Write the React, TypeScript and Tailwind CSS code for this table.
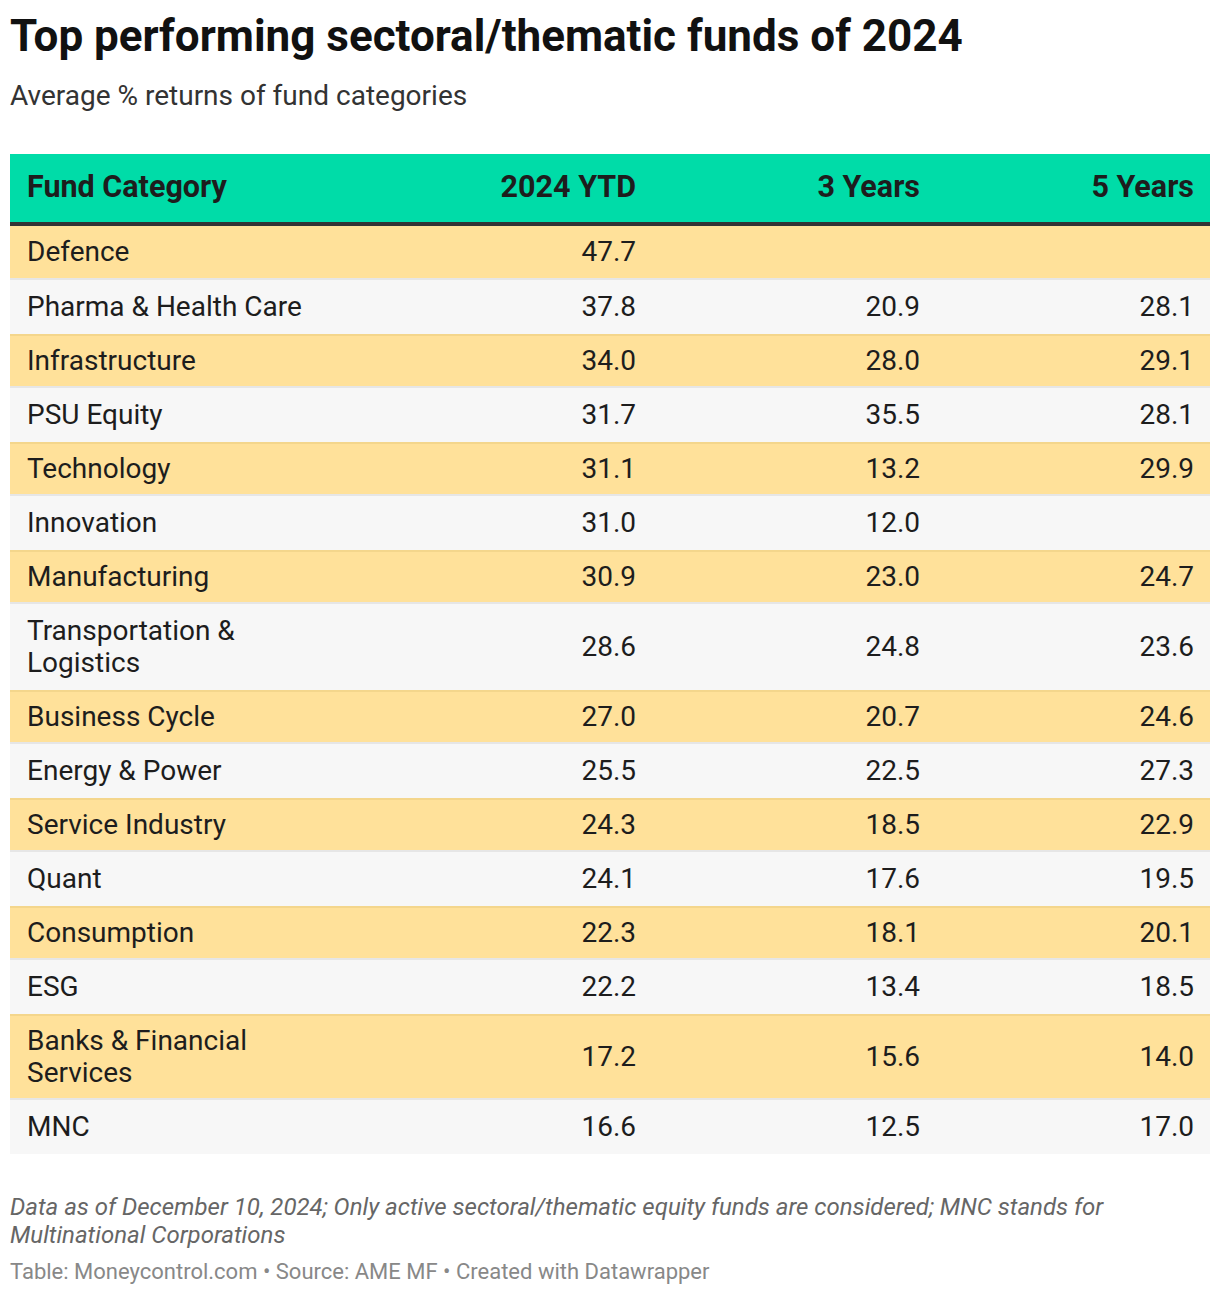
import React from "react";

type Row = { name: string; ytd: string; y3: string; y5: string };

const rows: Row[] = [
  { name: "Defence", ytd: "47.7", y3: "", y5: "" },
  { name: "Pharma & Health Care", ytd: "37.8", y3: "20.9", y5: "28.1" },
  { name: "Infrastructure", ytd: "34.0", y3: "28.0", y5: "29.1" },
  { name: "PSU Equity", ytd: "31.7", y3: "35.5", y5: "28.1" },
  { name: "Technology", ytd: "31.1", y3: "13.2", y5: "29.9" },
  { name: "Innovation", ytd: "31.0", y3: "12.0", y5: "" },
  { name: "Manufacturing", ytd: "30.9", y3: "23.0", y5: "24.7" },
  { name: "Transportation & Logistics", ytd: "28.6", y3: "24.8", y5: "23.6" },
  { name: "Business Cycle", ytd: "27.0", y3: "20.7", y5: "24.6" },
  { name: "Energy & Power", ytd: "25.5", y3: "22.5", y5: "27.3" },
  { name: "Service Industry", ytd: "24.3", y3: "18.5", y5: "22.9" },
  { name: "Quant", ytd: "24.1", y3: "17.6", y5: "19.5" },
  { name: "Consumption", ytd: "22.3", y3: "18.1", y5: "20.1" },
  { name: "ESG", ytd: "22.2", y3: "13.4", y5: "18.5" },
  { name: "Banks & Financial Services", ytd: "17.2", y3: "15.6", y5: "14.0" },
  { name: "MNC", ytd: "16.6", y3: "12.5", y5: "17.0" },
];

export default function App() {
  return (
    <div
      className="w-[1220px] bg-white px-[10px] pt-[10px] pb-[10px] text-[#1d1d1d]"
      style={{ fontFamily: "Roboto, 'Liberation Sans', sans-serif" }}
    >
      <h1 className="text-[44px] font-bold leading-[52px] text-[#111]">
        Top performing sectoral/thematic funds of 2024
      </h1>
      <p className="mt-[18px] text-[28px] leading-[32px] text-[#333]">
        Average % returns of fund categories
      </p>

      <div className="mt-[42px] w-[1200px]">
        <div className="grid h-[72px] grid-cols-[340px_302px_284px_274px] items-center border-b-[4px] border-[#333] bg-[#00dca8] pb-[2px] text-[30.5px] font-bold text-[#1d1d1d]">
          <div className="pl-[17px]">Fund Category</div>
          <div className="pr-[16px] text-right">2024 YTD</div>
          <div className="pr-[16px] text-right">3 Years</div>
          <div className="pr-[16px] text-right">5 Years</div>
        </div>
        {rows.map((r, i) => {
          const yellow = i % 2 === 0;
          return (
            <div
              key={r.name}
              className={
                "grid grid-cols-[340px_302px_284px_274px] items-center text-[28px] leading-[32px] " +
                (yellow
                  ? "bg-[#ffe19a] border-b-[2px] border-b-[#e6e6e6] " + (i === 0 ? "" : "border-t-[2px] border-t-[#f4d68c]")
                  : "bg-[#f7f7f7]")
              }
            >
              <div className={"pl-[17px] pr-[17px] " + (yellow ? (i === 0 ? "py-[10px]" : "py-[9px]") : "py-[11px]")}>
                {r.name}
              </div>
              <div className="pr-[16px] text-right">{r.ytd}</div>
              <div className="pr-[16px] text-right">{r.y3}</div>
              <div className="pr-[16px] text-right">{r.y5}</div>
            </div>
          );
        })}
      </div>

      <div className="mt-[39px] text-[24px] leading-[28px] italic text-[#666]">
        Data as of December 10, 2024; Only active sectoral/thematic equity funds are considered; MNC stands for
        Multinational Corporations
      </div>
      <div className="mt-[9px] text-[22px] leading-[28px] text-[#888]">
        Table: Moneycontrol.com • Source: AME MF • Created with Datawrapper
      </div>
    </div>
  );
}
